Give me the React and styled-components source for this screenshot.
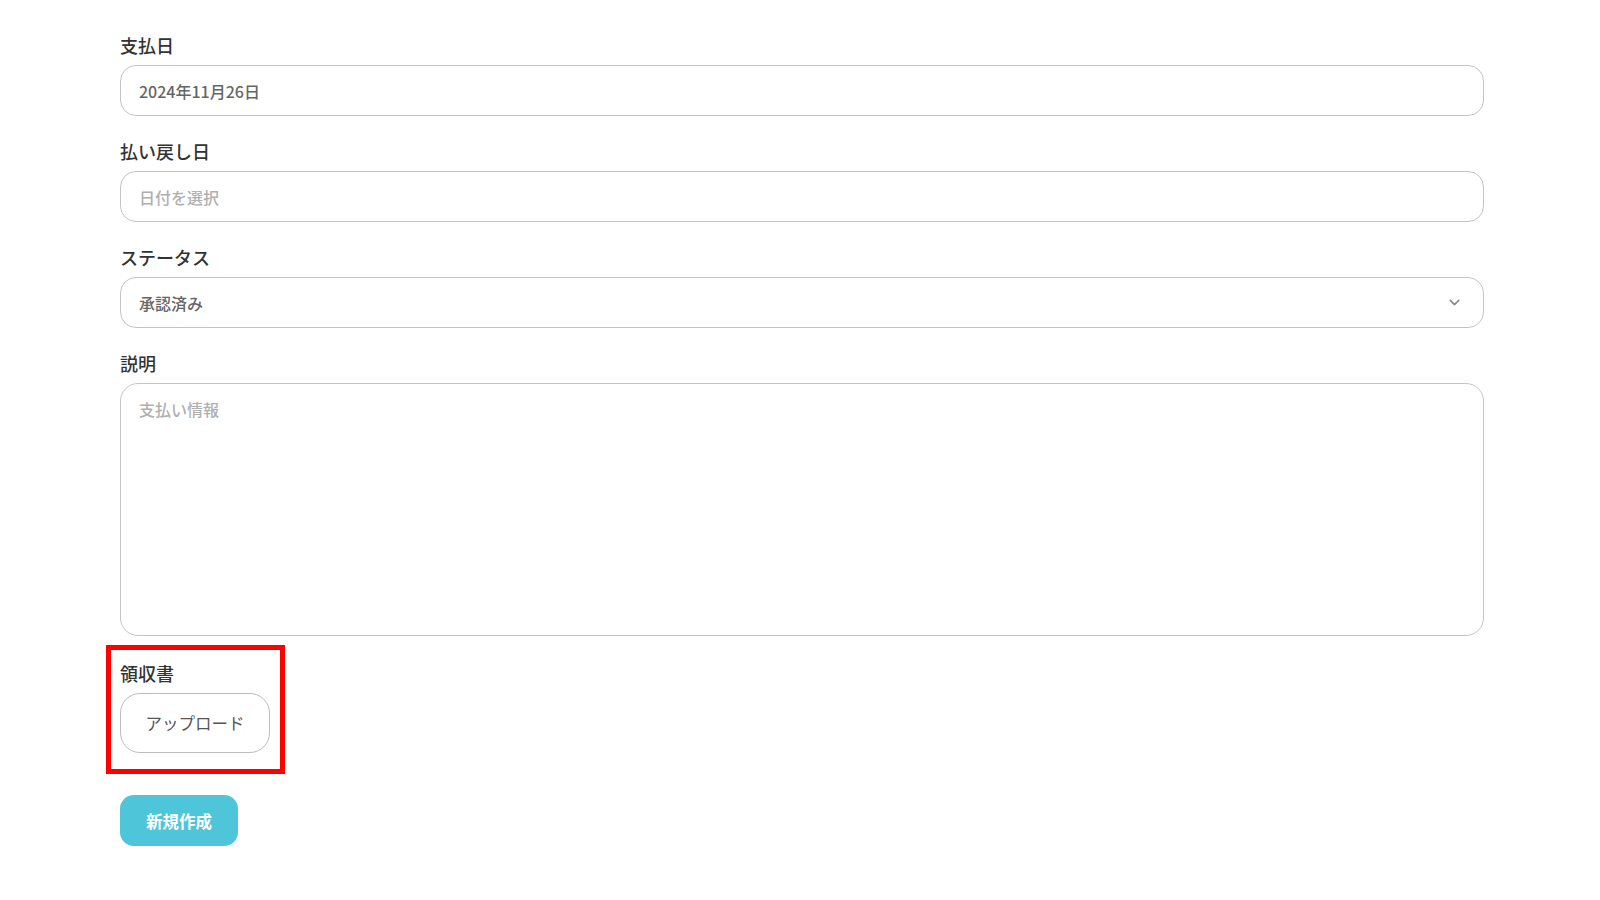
import React from 'react';
import styled, { createGlobalStyle } from 'styled-components';

const GlobalStyle = createGlobalStyle`
  html, body {
    margin: 0;
    padding: 0;
    background: #ffffff;
  }
  body {
    font-family: "Noto Sans CJK JP", "Noto Sans", sans-serif;
    color: #333;
  }
  * {
    box-sizing: border-box;
  }
`;

const Page = styled.div`
  padding: 33px 0 40px 120px;
`;

const Form = styled.form`
  width: 1364px;
  display: flex;
  flex-direction: column;
  gap: 23px;
`;

const Field = styled.div`
  display: flex;
  flex-direction: column;
  gap: 8px;
`;

const ReceiptField = styled(Field)`
  position: relative;
  align-self: flex-start;
  margin-top: 2px;

  &::after {
    content: '';
    position: absolute;
    top: -16px;
    left: -14px;
    right: -15px;
    bottom: -21px;
    border: 5px solid #ff0000;
    pointer-events: none;
  }
`;

const Label = styled.label`
  font-size: 18px;
  line-height: 24px;
  font-weight: 500;
  color: #333;
`;

const inputBase = `
  width: 100%;
  border: 1px solid #c4c4c4;
  background: #fff;
  font-family: "Noto Sans CJK JP", "Noto Sans", sans-serif;
  font-size: 16px;
  font-weight: 500;
  color: #666;
  outline: none;

  &::placeholder {
    color: #b0b0b0;
  }
`;

const TextInput = styled.input`
  ${inputBase}
  height: 51px;
  border-radius: 16px;
  padding: 0 18px;
`;

const SelectBox = styled.div`
  position: relative;
  height: 51px;
  border: 1px solid #c4c4c4;
  border-radius: 16px;
  padding: 0 18px;
  display: flex;
  align-items: center;
  justify-content: space-between;
  font-size: 16px;
  font-weight: 500;
  color: #666;
`;

const Chevron = styled.svg`
  width: 17px;
  height: 17px;
  margin-right: 2px;
  color: #8a8a8a;
`;

const TextArea = styled.textarea`
  ${inputBase}
  height: 253px;
  border-radius: 18px;
  padding: 14px 18px;
  line-height: 22px;
  resize: none;
  display: block;
`;

const UploadButton = styled.button`
  width: 150px;
  height: 60px;
  border: 1px solid #bdbdbd;
  border-radius: 20px;
  background: #fff;
  font-family: "Noto Sans CJK JP", "Noto Sans", sans-serif;
  font-size: 16.5px;
  color: #555;
  cursor: pointer;
`;

const SubmitButton = styled.button`
  align-self: flex-start;
  margin-top: 19px;
  width: 118px;
  height: 51px;
  border: none;
  border-radius: 14px;
  background: #4ec5d9;
  color: #fff;
  font-family: "Noto Sans CJK JP", "Noto Sans", sans-serif;
  font-size: 16.5px;
  font-weight: 700;
  cursor: pointer;
`;

export default function App() {
  return (
    <>
      <GlobalStyle />
      <Page>
        <Form onSubmit={(e) => e.preventDefault()}>
          <Field>
            <Label>支払日</Label>
            <TextInput defaultValue="2024年11月26日" readOnly />
          </Field>
          <Field>
            <Label>払い戻し日</Label>
            <TextInput placeholder="日付を選択" readOnly />
          </Field>
          <Field>
            <Label>ステータス</Label>
            <SelectBox>
              <span>承認済み</span>
              <Chevron viewBox="0 0 24 24" fill="none" stroke="currentColor" strokeWidth="2.2" strokeLinecap="round" strokeLinejoin="round">
                <path d="M6 9l6 6 6-6" />
              </Chevron>
            </SelectBox>
          </Field>
          <Field>
            <Label>説明</Label>
            <TextArea placeholder="支払い情報" />
          </Field>
          <ReceiptField>
            <Label>領収書</Label>
            <UploadButton type="button">アップロード</UploadButton>
          </ReceiptField>
          <SubmitButton type="submit">新規作成</SubmitButton>
        </Form>
      </Page>
    </>
  );
}
